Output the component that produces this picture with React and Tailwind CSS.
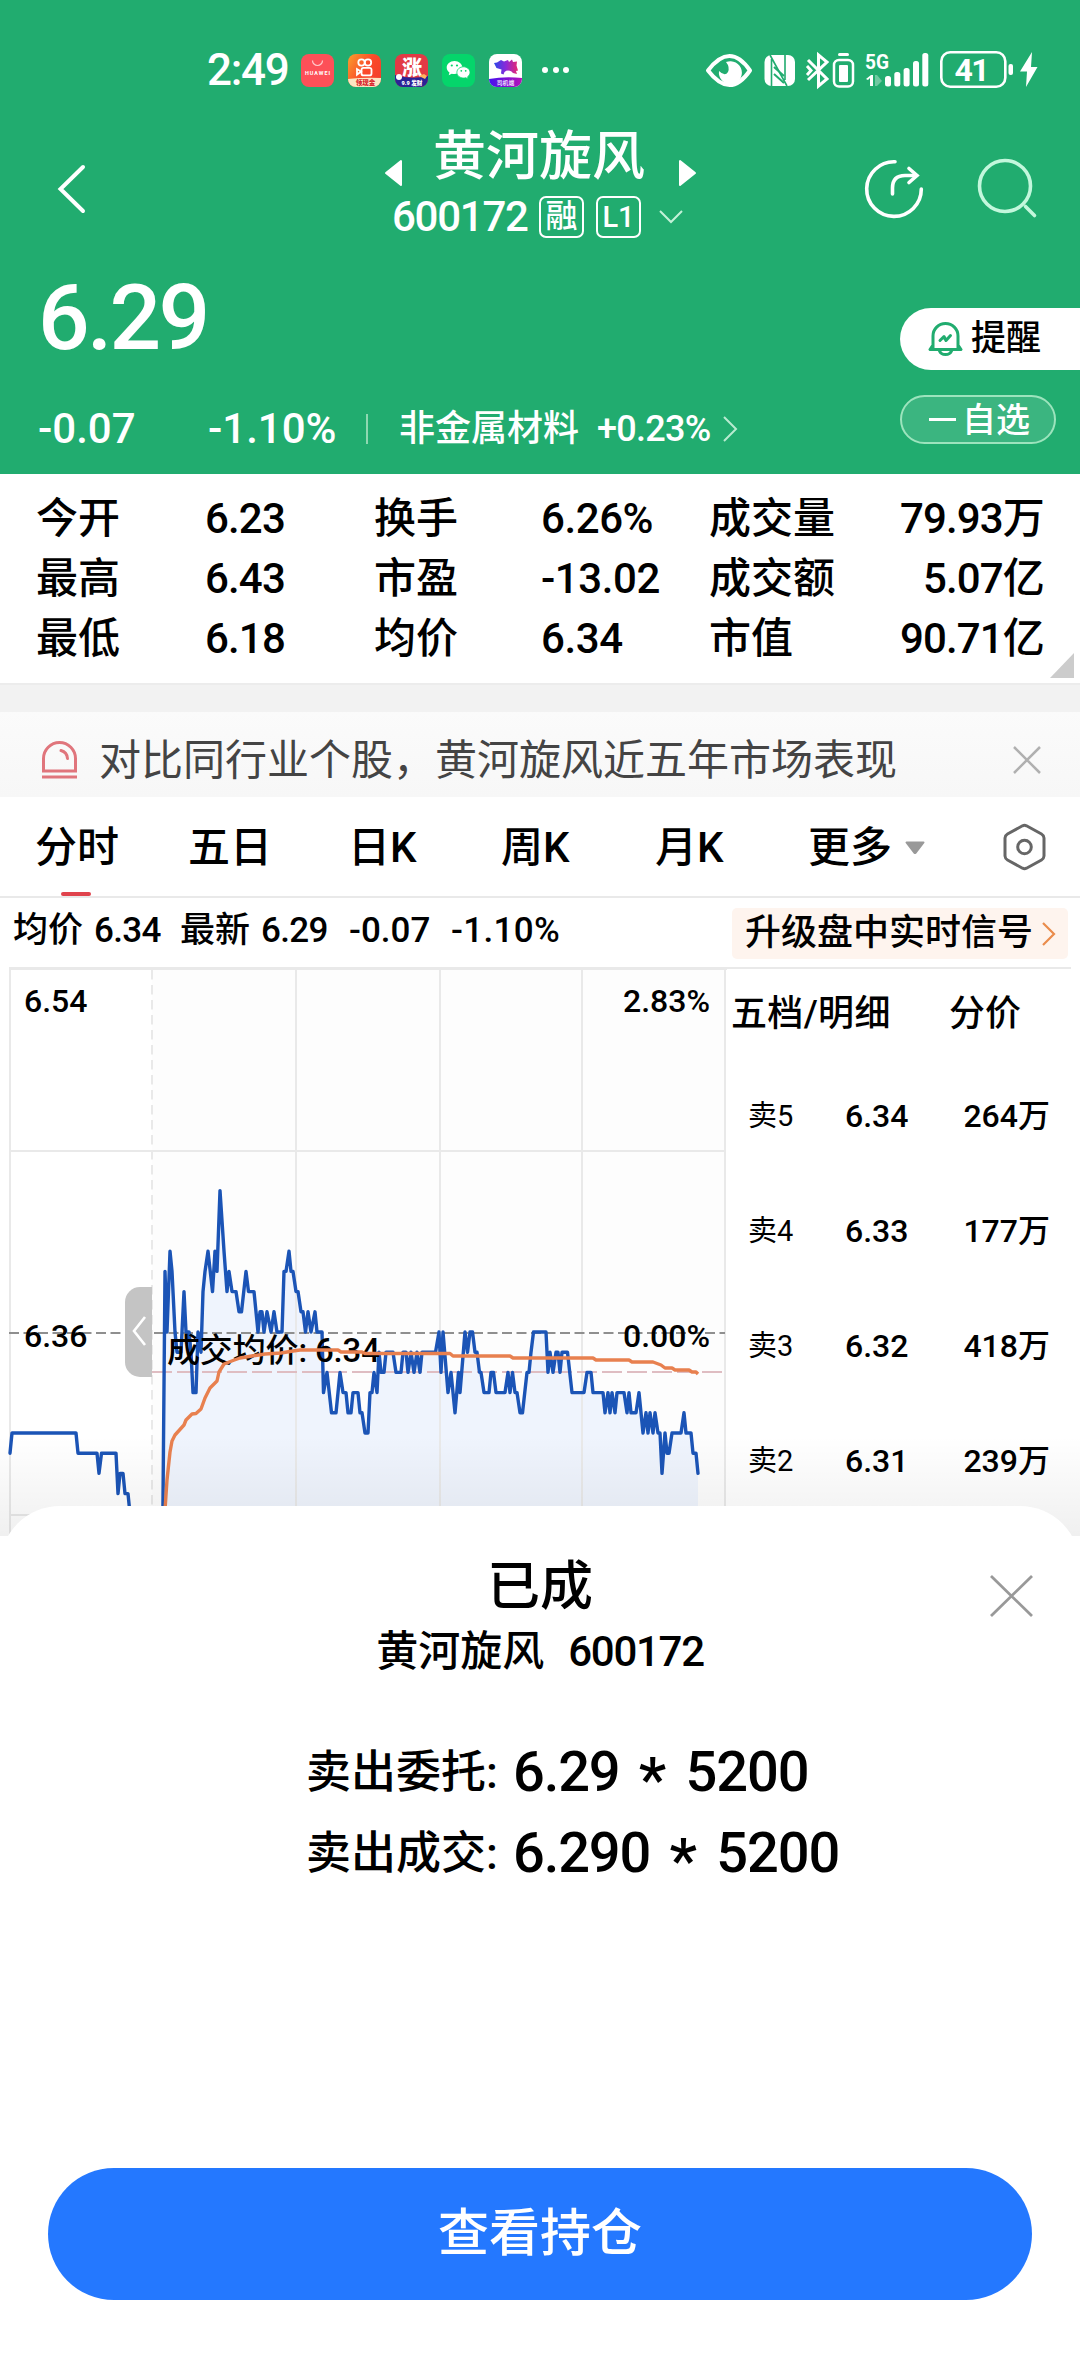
import React from "react";

const stats = [
  ["今开", "6.23", "换手", "6.26%", "成交量", "79.93万"],
  ["最高", "6.43", "市盈", "-13.02", "成交额", "5.07亿"],
  ["最低", "6.18", "均价", "6.34", "市值", "90.71亿"],
];

const asks = [
  ["卖5", "6.34", "264万"],
  ["卖4", "6.33", "177万"],
  ["卖3", "6.32", "418万"],
  ["卖2", "6.31", "239万"],
];

// [x, price in cents]
const preOpen = [
  [10, 630], [12, 631], [76, 631], [78, 630], [97, 630], [99, 629], [101.5, 630],
  [116, 630], [118, 628], [120, 629], [123, 629], [125, 628], [128, 628], [131, 626.5],
];

const session = [
  [162, 622], [165, 639], [167, 636], [170, 640], [172, 639], [175, 636], [177, 635],
  [181, 635], [184, 638], [186, 636], [189, 636], [191, 635], [193, 633], [196, 633],
  [198, 636], [201, 635], [203, 638], [205, 639], [208, 640], [212.5, 638], [215, 640],
  [217, 639], [220, 643], [224, 640], [227, 638], [229, 639], [232, 638], [236, 638],
  [239, 637], [241.5, 637], [246, 639], [248.5, 638], [254, 638], [258, 636], [260, 637],
  [262, 637], [264, 636], [267, 637], [271, 636], [274, 637], [277, 636], [282, 636],
  [284, 639], [286, 639], [289, 640], [291, 639], [293, 639], [296, 638], [298, 638],
  [301, 637], [303, 637], [305.5, 636], [308, 637], [311, 636], [315, 637], [317, 636],
  [322, 636], [323.5, 633], [327, 634], [331.5, 632], [336, 632], [340, 634], [343, 633],
  [346, 633], [348, 632], [351, 632], [353, 633], [358, 633], [360, 632], [362, 632],
  [365, 631], [368, 631], [370, 633], [372, 633], [374, 634], [377, 633], [379, 635],
  [381, 634], [384, 634], [386, 635], [393, 635], [396, 634], [401, 634], [403, 635],
  [406, 635], [408, 634], [411, 635], [414, 634], [417, 635], [420, 634], [422, 635],
  [435.5, 635], [439, 636], [441, 634], [443, 636], [448, 633], [451, 634], [455, 632],
  [458.5, 634], [460, 633], [465, 636], [467.5, 635], [470, 636], [472.5, 636],
  [475, 635], [477, 635], [479.5, 634], [481, 634], [484, 633], [489, 633], [491, 634],
  [493.5, 634], [496, 633], [505, 633], [508, 634], [510, 633], [512.5, 634], [515, 633],
  [517, 633], [520, 632], [522.5, 632], [527, 634], [529, 634], [531, 635], [533.5, 636],
  [546, 636], [548, 634], [550, 635], [553, 634], [556, 635], [558, 635], [560, 634],
  [562, 635], [567.5, 635], [572, 633], [584, 633], [587, 634], [591, 634], [593, 633],
  [603, 633], [605, 632], [608, 633], [610, 632], [612, 633], [615, 632], [617, 633],
  [624, 633], [627, 632], [629, 633], [631, 632], [636, 632], [639, 633], [643, 631],
  [646, 632], [648, 631], [650, 632], [653, 631], [655, 632], [658, 631], [660, 631],
  [662, 629], [665, 631], [667, 630], [669, 630], [672, 631], [681, 631], [684, 632],
  [686, 631], [691, 631], [693, 630], [696, 630], [698, 629],
];

const average =
  "165,1510 167,1480 170,1452 172,1441 175,1435 184,1425 186,1420 192,1414 196,1413.5 201,1409 205,1398 210,1388 217,1381 219,1372 224,1364 233,1360.5 240,1358 252,1356 265,1354 281,1353 293,1351 300,1350 338,1350 341,1352 362,1352 365,1353.5 450,1353.5 453,1356 510,1356 513,1358 593,1358 596,1360 629,1360 632,1362 653,1362 661,1365 665,1368 672,1368 675,1370 689,1370 692,1372 696,1372 698,1374";

const priceY = (cents) => 1332 + (636 - cents) * 20.2;
const toPoints = (data) => data.map(([x, c]) => `${x},${priceY(c)}`).join(" ");

const StatusBar = () => (
  <div className="flex h-[110px] items-center pt-[30px] pl-[207px]">
    <span className="w-[94px] text-[44px] leading-[80px] tracking-[-0.03em] text-white">
      2:49
    </span>
    <div className="flex gap-[14px]">
      <svg width="33" height="33" viewBox="0 0 33 33">
        <rect width="33" height="33" rx="8" fill="#fd5058" />
        <path d="M11.5 6.5a5 5 0 0 0 10 0" fill="none" stroke="#ffc9cb" strokeWidth="1.2" />
        <text x="16.5" y="21" fontSize="5.4" fontWeight="700" fill="#fff" textAnchor="middle" textLength="25">
          HUAWEI
        </text>
      </svg>
      <svg width="33" height="33" viewBox="0 0 33 33">
        <defs>
          <linearGradient id="ks" x1="0" y1="0" x2="1" y2="0.6">
            <stop offset="0" stopColor="#f9a02c" />
            <stop offset="0.6" stopColor="#fb4a2a" />
            <stop offset="1" stopColor="#f4402c" />
          </linearGradient>
        </defs>
        <rect width="33" height="33" rx="8" fill="url(#ks)" />
        <g fill="none" stroke="#fff" strokeWidth="1.8">
          <circle cx="13.5" cy="8.5" r="3.2" />
          <circle cx="20" cy="8.5" r="3.2" />
          <rect x="13.5" y="13.8" width="10" height="7.6" rx="2" />
          <path d="M13 17.5 9 15v5.6z" />
        </g>
        <path d="M0 25q16-2 33-1v1a8 8 0 0 1-8 8H8a8 8 0 0 1-8-8z" fill="#fbe6c3" />
        <text x="17.5" y="31" fontSize="6.5" fontWeight="900" fill="#d8232a" textAnchor="middle">
          领现金
        </text>
      </svg>
      <svg width="33" height="33" viewBox="0 0 33 33">
        <rect width="33" height="33" rx="8" fill="#e23a45" />
        <text x="17" y="21" fontSize="20" fontWeight="900" fill="#fff" textAnchor="middle">
          涨
        </text>
        <path d="M0 21q16 5 33 1v3a8 8 0 0 1-8 8H8a8 8 0 0 1-8-8z" fill="#2b2296" />
        <circle cx="4" cy="23" r="3" fill="#fff" />
        <path d="m24 22 5-2 3 2-2 3z" fill="#ffb45f" />
        <text x="17" y="31" fontSize="5.6" fontWeight="900" fill="#fff" textAnchor="middle">
          9.9 发财
        </text>
      </svg>
      <svg width="33" height="33" viewBox="0 0 33 33">
        <rect width="33" height="33" rx="8" fill="#05d56b" />
        <path d="M12.5 7C8 7 4.7 10 4.7 13.6c0 2 1 3.8 2.8 5l-.8 2.6 3-1.5q1.3.4 2.8.4C17 20 20.3 17.2 20.3 13.6 20.3 10 17 7 12.5 7z" fill="#fff" />
        <path d="M21.5 12.8c-3.7 0-6.6 2.5-6.6 5.6s2.900 5.600 6.600 5.600q1.200 0 2.300-.3l2.400 1.300-.6-2.200c1.500-1 2.400-2.600 2.400-4.400 0-3.100-2.900-5.600-6.500-5.600z" fill="#fff" stroke="#05d56b" strokeWidth="0.8" />
        <g fill="#05d56b">
          <circle cx="9.8" cy="11.5" r="1.1" />
          <circle cx="15" cy="11.5" r="1.1" />
          <circle cx="19.3" cy="16.8" r="0.9" />
          <circle cx="23.7" cy="16.8" r="0.9" />
        </g>
      </svg>
      <svg width="33" height="33" viewBox="0 0 33 33">
        <defs>
          <linearGradient id="van" x1="0" y1="0" x2="1" y2="0">
            <stop offset="0" stopColor="#2b49e8" />
            <stop offset="0.5" stopColor="#8b28d8" />
            <stop offset="1" stopColor="#e8296f" />
          </linearGradient>
          <linearGradient id="vanBand" x1="0" y1="0" x2="1" y2="0">
            <stop offset="0" stopColor="#4410f0" />
            <stop offset="1" stopColor="#b512b8" />
          </linearGradient>
        </defs>
        <rect width="33" height="33" rx="8" fill="#fff" />
        <path d="M5 9 8 8.500 12 6l3 1.500 4-1.500 1 2 3-2.500 1 2.500 4-.5-.5 4 1.500 5-2 .5 1 3-4-1-1.500-1.500q-4-2-7 .5l-1 2.500-2.500-1 .5-4-5-1.500z" fill="url(#van)" />
        <path d="M0 25q16-3 33-1v1a8 8 0 0 1-8 8H8a8 8 0 0 1-8-8z" fill="url(#vanBand)" />
        <text x="16.5" y="30.5" fontSize="5.8" fontWeight="500" fill="#fff" textAnchor="middle">
          司机端
        </text>
      </svg>
    </div>
    <div className="ml-[20px] flex gap-[4.5px]">
      <i className="size-[6px] rounded-full bg-white" />
      <i className="size-[6px] rounded-full bg-white" />
      <i className="size-[6px] rounded-full bg-white" />
    </div>
    <svg className="ml-[134px]" width="340" height="44" viewBox="702 47 340 44" fill="#fff">
      <path d="M707 69.500q22-29 42 0-20 29-42 0z" fill="none" stroke="#fff" strokeWidth="4" strokeLinejoin="round" />
      <path d="M725 61a11.500 11.500 0 1 1-7 9q6 6 9 1 2-5-2-10z" />
      {/* NFC */}
      <rect x="763.5" y="54" width="30.5" height="31" rx="7" />
      <g fill="none" stroke="#21ac6f" strokeWidth="2">
        <path d="M770.5 58v27M784 54v25M769 54l17 31" strokeWidth="1.600" />
        <path d="m773 66 10 9M773 73l10 9" />
      </g>
      <path d="m807 59 19 19-8.500 7V54l8.500 7-19 18M806 65l4 4.500-4 4.500" fill="none" stroke="#fff" strokeWidth="3" />
      <rect x="837" y="52" width="11" height="3" rx="1.5" />
      <rect x="833" y="59" width="19" height="26.5" rx="5" fill="none" stroke="#fff" strokeWidth="2.5" />
      <rect x="838" y="64" width="9" height="17" rx="1" />
      <text x="864" y="67.5" fontSize="20" fontWeight="700" textLength="24" lengthAdjust="spacingAndGlyphs">
        5G
      </text>
      <path d="m865 78 5-4h2v11h-3v-8l-2 2z" />
      <path d="M874 74h2l5 6-5 5h-2z" opacity="0.35" />
      <rect x="884" y="75" width="6" height="10.5" rx="2.5" />
      <rect x="893.3" y="71" width="6" height="14.5" rx="2.5" />
      <rect x="902.6" y="67" width="6" height="18.5" rx="2.5" />
      <rect x="912" y="60" width="6" height="25.5" rx="2.5" />
      <rect x="921.3" y="52" width="6" height="33.5" rx="2.5" />
      <rect x="940.3" y="51.3" width="64" height="34.5" rx="9" fill="none" stroke="#fff" strokeWidth="2.6" />
      <text x="971" y="80" fontSize="32" fontWeight="700" textAnchor="middle" textLength="35">
        41
      </text>
      <rect x="1007.5" y="63" width="4.5" height="11" rx="2" />
      <path d="m1031 51-12 19.500h7L1025 86l11.500-20h-6.500z" />
    </svg>
  </div>
);

const Header = () => (
  <div className="flex h-[140px]">
    <svg className="mt-[50px] ml-[52px]" width="40" height="58" viewBox="52 160 40 58">
      <path d="M83 167 60.500 189 83 211" fill="none" stroke="#fff" strokeWidth="4" strokeLinecap="round" />
    </svg>
    <svg className="mt-[48px] ml-[290px]" width="22" height="30" viewBox="0 0 22 30">
      <path d="M4 15 19 3v24z" fill="#fff" stroke="#fff" strokeWidth="2" strokeLinejoin="round" />
    </svg>
    <div className="ml-[-16px] w-[304px]">
      <div className="ml-[45px] h-[80px] pt-px text-[53px] leading-[92px] whitespace-nowrap text-white">
        黄河旋风
      </div>
      <div className="flex items-center pl-[4px] text-white">
        <span className="w-[147px] text-[42px] leading-[53px] tracking-[-0.03em]">600172</span>
        <span className="mr-[12px] h-[42px] w-[45px] rounded-[7px] border-2 border-white text-center text-[32px] leading-[37px]">
          融
        </span>
        <span className="h-[42px] w-[45px] rounded-[7px] border-2 border-white text-center text-[29px] leading-[38px]">
          L1
        </span>
        <svg className="ml-[17px] shrink-0" width="26" height="16" viewBox="0 0 26 16">
          <path d="m2 2 11 11L24 2" fill="none" stroke="#c3f2d8" strokeWidth="2" />
        </svg>
      </div>
    </div>
    <svg className="mt-[48px] ml-[-15px]" width="22" height="30" viewBox="0 0 22 30">
      <path d="M18 15 3 3v24z" fill="#fff" stroke="#fff" strokeWidth="2" strokeLinejoin="round" />
    </svg>
    <svg className="mt-[46px] ml-[161px]" width="190" height="70" viewBox="860 156 190 70" fill="none" strokeLinecap="round">
      <g stroke="#fff" strokeWidth="3.600">
        <path d="M895 161.800A27.300 27.300 0 1 0 921.300 189" />
        <path d="M892.500 194v-6q0-12.500 12.500-12.500h10" />
        <path d="m909 168.500 8 7-8 7" />
      </g>
      <g stroke="#c3f7dc" strokeWidth="3.600">
        <circle cx="1005" cy="186" r="25.5" />
        <path d="m1025.500 206.500 9 9" />
      </g>
    </svg>
  </div>
);

const Quote = () => (
  <div className="flex h-[224px] justify-between">
    <div className="pl-[38px] text-white">
      <div className="h-[132px] pt-[2px] text-[91px] leading-[132px] tracking-[-0.03em]">6.29</div>
      <div className="flex h-[92px] items-center pt-[2px] text-[42px] leading-[90px]">
        <span className="w-[170px]">-0.07</span>
        <span className="w-[158px]">-1.10%</span>
        <i className="h-[30px] w-[2px] bg-[#8ed8b1]" />
        <span className="ml-[31px] w-[198px] text-[36px]">非金属材料</span>
        <span className="text-[36px] tracking-[-0.02em]">+0.23%</span>
        <svg className="ml-[11px]" width="16" height="28" viewBox="0 0 16 28">
          <path d="m2 2 12 12L2 26" fill="none" stroke="#b8ebd0" strokeWidth="2" />
        </svg>
      </div>
    </div>
    <div className="w-[180px] pt-[58px]">
      <div className="flex h-[62px] items-center rounded-l-full bg-white pl-[27px] text-[35px] leading-[62px] text-black">
        <svg className="mr-[8px]" width="36" height="40" viewBox="0 0 36 40" fill="none" stroke="#21ac6f" strokeWidth="3" strokeLinecap="round" strokeLinejoin="round">
          <path d="M6 30V17a12.500 12.500 0 0 1 25 0v13M3.500 30.500h30M6 26l-3 4.500M31 26l3 4.500M12.500 32a6.300 5 0 0 0 12 0" />
          <path d="m13 21.500 4-4 2 4 4.500-5" />
        </svg>
        提醒
      </div>
      <div className="mt-[25px] flex h-[49px] w-[156px] items-center rounded-full border-2 border-[#9ce4bd] bg-[#3bb580] pl-[27px] text-[34px] leading-[46px] text-white">
        <i className="mr-[6px] h-[3.5px] w-[27px] bg-white" />
        自选
      </div>
    </div>
  </div>
);

const Stats = () => (
  <div className="relative h-[209px] pt-[15px]">
    {stats.map((row) => (
      <div key={row[0]} className="flex h-[60px] items-center pl-[36px] text-[42px] leading-[60px]">
        <span className="w-[169px]">{row[0]}</span>
        <span className="w-[169px] tracking-[-0.02em]">{row[1]}</span>
        <span className="w-[167px]">{row[2]}</span>
        <span className="w-[168px] tracking-[-0.01em]">{row[3]}</span>
        <span className="w-[140px]">{row[4]}</span>
        <span className="w-[195px] text-right tracking-[-0.02em]">{row[5]}</span>
      </div>
    ))}
    <svg className="absolute right-[6px] bottom-[5px]" width="24" height="25">
      <path d="M24 0v25H0z" fill="#ccc" />
    </svg>
  </div>
);

const Notice = () => (
  <div className="flex h-[85px] items-center bg-linear-to-b from-[#fbfbfb] to-[#f7f7f7] pl-[40px] text-[42px] text-[#444]">
    <svg className="mt-[10px] mr-[20px]" width="39" height="42" viewBox="0 0 39 42" fill="none" stroke="#e0757c" strokeWidth="3">
      <path d="M3.500 32V19.500a16 16 0 0 1 32 0V32z" />
      <path d="M2 38h35" />
      <path d="M21 11.500q6 1.500 6.500 8" strokeLinecap="round" />
    </svg>
    <span className="w-[913px] pt-[13px] leading-[72px] font-normal whitespace-nowrap">
      对比同行业个股，黄河旋风近五年市场表现
    </span>
    <svg className="mt-[11px]" width="30" height="30" viewBox="0 0 30 30">
      <path d="m2 2 26 26M28 2 2 28" stroke="#b0b0b0" strokeWidth="2.5" />
    </svg>
  </div>
);

const Tabs = () => (
  <div className="flex h-[101px] border-b-2 border-[#e9e9e9] pl-[35px] text-[42px] leading-[101px]">
    <div className="flex w-[153px] flex-col">
      <span className="h-[95px]">分时</span>
      <i className="ml-[26px] h-[4px] w-[30px] rounded-full bg-[#e0434c]" />
    </div>
    <span className="w-[160px]">五日</span>
    <span className="w-[153px]">日K</span>
    <span className="w-[154px]">周K</span>
    <span className="w-[153px]">月K</span>
    <span className="w-[97px]">更多</span>
    <svg className="mt-[44px] w-[98px]" height="14" viewBox="0 0 98 14">
      <path d="M1.500 1.500h17l-8 10.500h-1z" fill="#999" stroke="#999" strokeWidth="2" strokeLinejoin="round" />
    </svg>
    <svg className="mt-[26px]" width="44" height="48" viewBox="0 0 44 48" fill="none" stroke="#666" strokeWidth="3">
      <path d="M19.500 2.800a5 5 0 0 1 4 0l15 8.200a5 5 0 0 1 2.500 4v18a5 5 0 0 1-2.500 4l-15 8.200a5 5 0 0 1-4 0l-15-8.200A5 5 0 0 1 2 33V15a5 5 0 0 1 2.500-4z" />
      <circle cx="21.5" cy="24" r="6.8" />
    </svg>
  </div>
);

const InfoBar = () => (
  <div className="flex h-[69px] pl-[13px] text-[35px] leading-[66px] whitespace-nowrap">
    <span className="w-[81px]">均价</span>
    <span className="w-[86px] tracking-[-0.02em]">6.34</span>
    <span className="w-[81px]">最新</span>
    <span className="w-[88px] tracking-[-0.02em]">6.29</span>
    <span className="w-[102px]">-0.07</span>
    <span className="w-[281px] tracking-[0.01em]">-1.10%</span>
    <div className="mt-[10px] flex h-[51px] w-[336px] items-center rounded-[5px] bg-[#fef4ee] pl-[13px] text-[36px] leading-[51px]">
      升级盘中实时信号
      <svg className="ml-[8px]" width="15" height="26" viewBox="0 0 15 26">
        <path d="m2 2 11 11L2 24" fill="none" stroke="#ea8c4c" strokeWidth="2.2" />
      </svg>
    </div>
  </div>
);

const Chart = () => (
  <svg className="shrink-0" width="727" height="569" viewBox="0 967 727 569" fontSize="32">
    <rect x="152" y="969" width="573" height="540" fill="#fdfdfd" />
    <polygon points={`162,1520 ${toPoints(session)} 698,1520`} fill="#eff4fd" />
    <g stroke="#e9e9e9" strokeWidth="2">
      <path d="M9 968.500h718" strokeWidth="3" />
      <path d="M10 968v568M296 968v568M440 968v568M582 968v568M725 968v568M9 1151h717M9 1515h717" />
      <path d="M152 970v566" strokeDasharray="9.5 5.5" />
    </g>
    <path d="M9 1333h716" stroke="#8f8f8f" strokeWidth="2" strokeDasharray="10 4.5" />
    <path d="M152 1372h574" stroke="#dfbdc2" strokeWidth="2" strokeDasharray="20 5" />
    <path d="M152 1287h-12a15 15 0 0 0-15 15v60a15 15 0 0 0 15 15h12z" fill="#c4c4c4" />
    <path d="m145 1317-11 14 11 14" fill="none" stroke="#fff" strokeWidth="2.6" />
    <g fill="none" strokeLinejoin="round" strokeLinecap="round" strokeWidth="3.4" stroke="#1b54b6">
      <polyline points={toPoints(preOpen)} />
      <polyline points={toPoints(session)} />
    </g>
    <text x="24" y="1011.5">6.54</text>
    <text x="24" y="1347">6.36</text>
    <text x="710" y="1011.5" textAnchor="end">2.83%</text>
    <text x="710" y="1347" textAnchor="end">0.00%</text>
    <text x="167" y="1362" fontSize="33" textLength="213">成交均价: 6.34</text>
    <polyline points={average} fill="none" stroke="#e8804f" strokeWidth="3.4" strokeLinejoin="round" />
  </svg>
);

const OrderBook = () => (
  <div className="mr-[9px] grow border-t-2 border-[#e9e9e9]">
    <div className="flex h-[90px] pl-[4px] text-[36px] leading-[90px]">
      <span className="w-[218px] tracking-[0.01em]">五档/明细</span>
      <span>分价</span>
    </div>
    {asks.map(([label, price, volume]) => (
      <div key={label} className="flex h-[115px] items-center pl-[21px] text-[32px] leading-[115px]">
        <span className="w-[97px] text-[29px] font-normal">{label}</span>
        <span className="w-[80px]">{price}</span>
        <span className="w-[125px] text-right">{volume}</span>
      </div>
    ))}
  </div>
);

const ResultRow = ({ label, price, amount }) => (
  <div className="flex h-[81px] items-center leading-[81px]">
    <span className="w-[207px] text-[45px]">{label}</span>
    <span className="text-[56px] tracking-[-0.02em]">{price}</span>
    <span className="mt-[14px] w-[66px] text-center text-[62px]">*</span>
    <span className="text-[56px] tracking-[-0.02em]">{amount}</span>
  </div>
);

const ResultSheet = () => (
  <div className="absolute inset-x-0 bottom-0 flex h-[870px] flex-col rounded-t-[60px] bg-white">
    <div className="mt-[49px] text-center text-[53px] leading-[64px]">已成</div>
    <div className="mt-[7px] flex justify-center gap-[24px] text-[42px] leading-[52px]">
      <span>黄河旋风</span>
      <span className="tracking-[-0.03em]">600172</span>
    </div>
    <div className="mt-[54px] pl-[306px]">
      <ResultRow label="卖出委托:" price="6.29" amount="5200" />
      <ResultRow label="卖出成交:" price="6.290" amount="5200" />
    </div>
    <button className="mx-[48px] mt-auto mb-[76px] h-[132px] rounded-full bg-[#2478ff] text-[51px] text-white">
      查看持仓
    </button>
    <svg className="absolute top-[68px] right-[46px]" width="45" height="44" viewBox="0 0 45 44">
      <path d="m2 2 41 40M43 2 2 42" stroke="#999" strokeWidth="2.8" />
    </svg>
  </div>
);

const App = () => {
  return (
    <div className="relative h-[2376px] w-[1080px] overflow-hidden bg-white font-[Roboto,'Noto_Sans_CJK_SC',sans-serif] font-medium text-black">
      <div className="h-[474px] bg-[#21ac6f]">
        <StatusBar />
        <Header />
        <Quote />
      </div>
      <Stats />
      <div className="h-[29px] border-t-2 border-[#ececec] bg-[#f2f2f2]" />
      <Notice />
      <Tabs />
      <InfoBar />
      <div className="flex h-[569px] overflow-hidden">
        <Chart />
        <OrderBook />
      </div>
      {/* shade above the sheet */}
      <div className="absolute inset-x-0 top-[1436px] h-[100px] bg-linear-to-b from-transparent to-black/6" />
      <ResultSheet />
    </div>
  );
};

export default App;
